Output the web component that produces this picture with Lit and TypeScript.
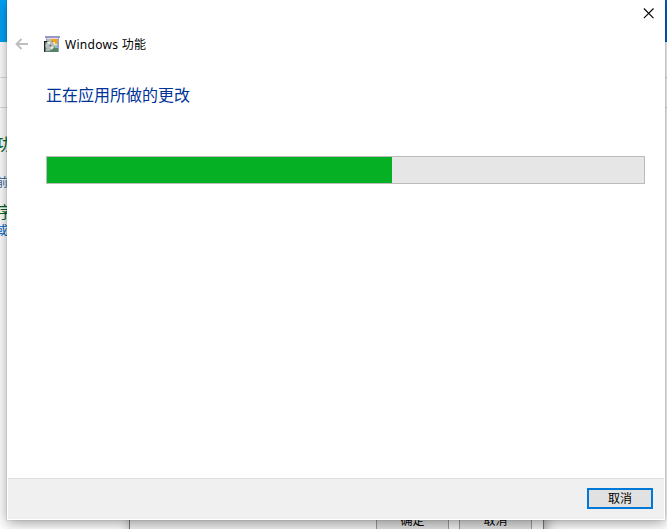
import { LitElement, html, css } from "lit";
import { customElement } from "lit/decorators.js";

@customElement("app-root")
class AppRoot extends LitElement {
  static styles = css`
    :host {
      display: block;
      position: relative;
      width: 667px;
      height: 529px;
      overflow: hidden;
      background: #fff;
      font: 12px/16px "Noto Sans", "Noto Sans CJK SC", sans-serif;
      color: #000;
    }
    * { box-sizing: border-box; }
    .panel { position: absolute; inset: 0; display: flex; flex-direction: column; background: #fff; }
    .caption { height: 42px; flex: none; background: linear-gradient(90deg, #00a2f5 0 50%, #0062c4 50%); }
    .address { height: 36px; flex: none; border-bottom: 1px solid #ddd; }
    .tools { height: 30px; flex: none; border-bottom: 1px solid #ddd; }
    .side { display: flex; flex-direction: column; align-items: flex-start; padding-top: 26px; white-space: nowrap; }
    .side span { display: block; margin-left: -4px; color: #0066cc; }
    .side .head { margin-left: -4px; font-size: 16px; line-height: 20px; color: #006621; }
    .side .note { margin: 21px 0 11px -4px; color: #35699f; }
    .side .link { line-height: 18px; }
    .options {
      position: absolute; left: 129px; top: 200px; width: 415px; height: 360px;
      border: 1px solid #777; background: #f0f0f0; box-shadow: 2px 2px 12px rgba(0,0,0,.35);
      display: flex; align-items: flex-end; justify-content: flex-end; gap: 10px; padding: 0 11px 26px 0;
    }
    .options div {
      width: 73px; height: 23px; border: 1px solid #999; background: #e1e1e1;
      text-align: center; line-height: 19px;
    }
    .dialog {
      position: absolute; left: 7px; top: -1px; width: 658px; height: 521px;
      display: flex; flex-direction: column; background: #fff;
      border: 1px solid #fff;
      box-shadow: 0 0 1px rgba(0,0,0,.35), 0 3px 13px rgba(0,0,0,.38);
    }
    .bar { height: 32px; flex: none; display: flex; justify-content: flex-end; padding: 8px 10px 0 0; }
    .title { height: 24px; flex: none; display: flex; align-items: center; padding-left: 7px; }
    .title span { padding-top: 2px; letter-spacing: .29px; }
    .arrow { margin-right: 15px; }
    .app { margin-right: 5px; }
    svg { display: block; flex: none; }
    .content { flex: 1; padding: 27px 19px 0 38px; }
    h1 { margin: 0; font-size: 16px; line-height: 24px; font-weight: 400; color: #003399; }
    .progress { height: 28px; margin-top: 49px; border: 1px solid #bcbcbc; background: #e6e6e6; }
    .fill { height: 100%; background: #06b025; }
    .footer {
      height: 41px; flex: none; display: flex; justify-content: flex-end; padding: 9px 11px 0 0;
      border-top: 1px solid #dfdfdf; background: #f0f0f0;
    }
    button {
      width: 66px; height: 21px; padding: 0; border: 2px solid #0078d7; background: #e1e1e1;
      font: inherit; color: inherit; line-height: 17px;
    }
  `;

  private progress = 57.8;

  render() {
    return html`
      <section class="panel">
        <div class="caption"></div>
        <div class="address"></div>
        <div class="tools"></div>
        <div class="side">
          <span class="head">功</span>
          <span class="note">前</span>
          <span class="head">序</span>
          <span class="link">或</span>
        </div>
      </section>
      <section class="options"><div>确定</div><div>取消</div></section>
      <section class="dialog">
        <div class="bar">
          <svg width="11" height="11" viewBox="0 0 11 11"><path d="M.9.5l9.6 9.6M10.5.5L.9 10.1" stroke="#000" stroke-width="1.1"/></svg>
        </div>
        <div class="title">
          <svg class="arrow" width="14" height="12" viewBox="0 0 14 12"><path d="M13 6H2M6.5 1L1.5 6l5 5" fill="none" stroke="#bdbdbd" stroke-width="1.8"/></svg>
          <svg class="app" width="16" height="16" viewBox="0 0 16 16">
            <path d="M2 2h13v14H2z" fill="#a3a3c8"/>
            <path d="M1 0h15v2H1z" fill="#9999c8"/>
            <path d="M3 2h11v1H3z" fill="#dcdcec"/>
            <path d="M3 3h10v2H3z" fill="#bcbcbc"/>
            <path d="M7 3h6v11H7z" fill="#fff4c0"/>
            <path d="M7 3h6v5h-2V6H7z" fill="#f5a70c"/>
            <path d="M9 9h4v3h-3z" fill="#8cc9b4"/>
            <path d="M1 5h8v2l2 5h3v4H1z" fill="#568467"/>
            <path d="M0 5h1v11H0zM1 5h2v1H1z" fill="#222"/>
            <ellipse cx="6" cy="9.5" rx="4.6" ry="4.4" fill="#bdc1bd"/>
            <path d="M6 9.5L3 6.5l3-.9zM6 9.5l3.5 2-2 2z" fill="#e8ebe7"/>
            <circle cx="6.4" cy="9.5" r="1.2" fill="#7c827b"/>
            <path d="M2 13h4v2H2z" fill="#b4b4b4"/>
          </svg>
          <span>Windows 功能</span>
        </div>
        <div class="content">
          <h1>正在应用所做的更改</h1>
          <div class="progress"><div class="fill" style="width:${this.progress}%"></div></div>
        </div>
        <div class="footer"><button>取消</button></div>
      </section>
    `;
  }
}
